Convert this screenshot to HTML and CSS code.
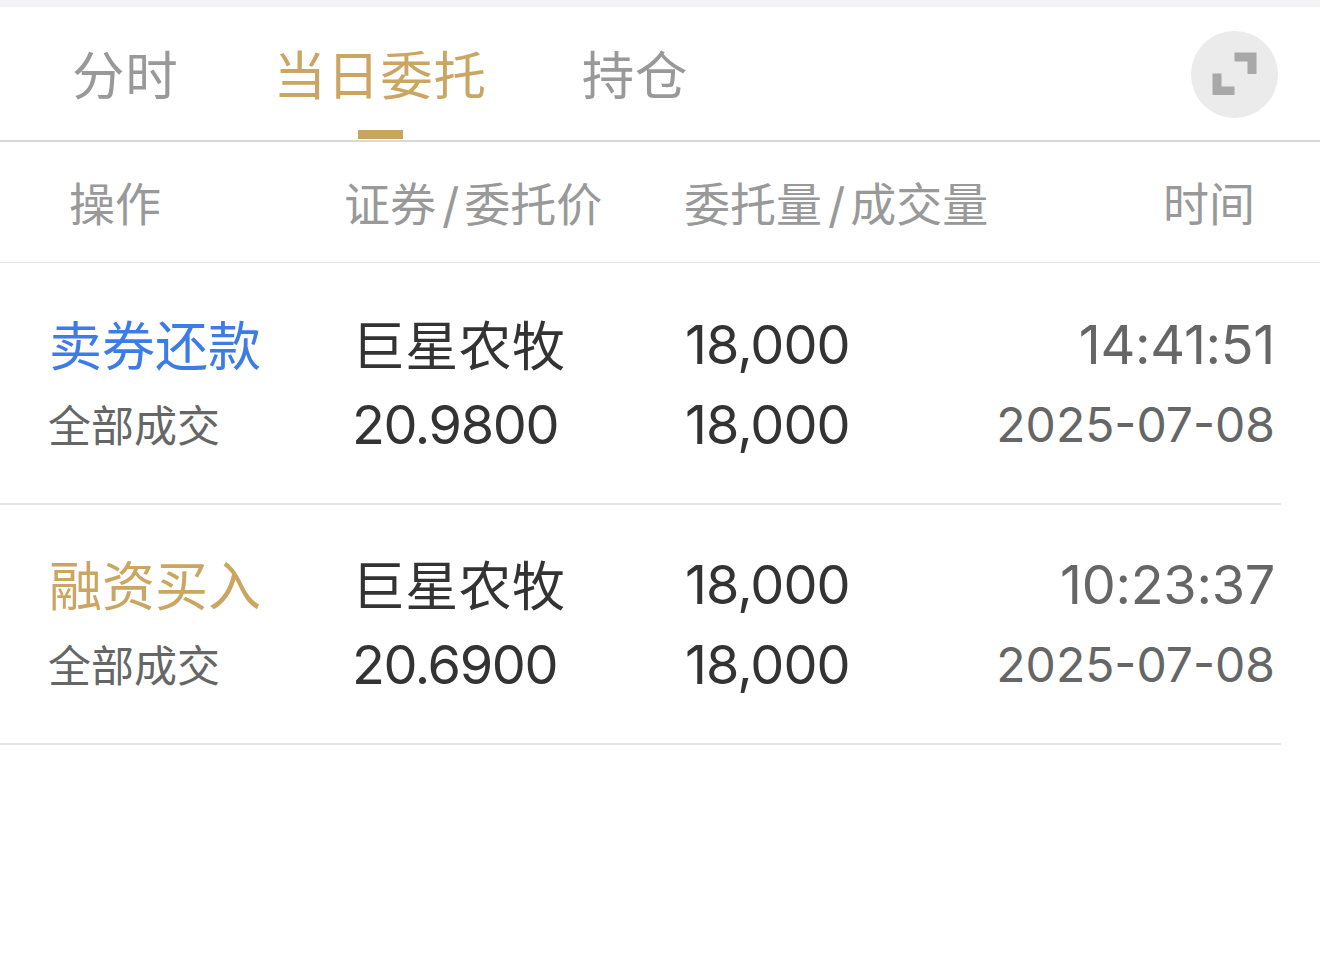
FILE: index.html
```html
<!DOCTYPE html>
<html lang="zh-CN">
<head>
    <meta charset="UTF-8">
    <meta name="viewport" content="width=device-width, initial-scale=1.0">
    <title>当日委托</title>
    <link rel="stylesheet" href="styles.css">
</head>
<body>
    <div class="top-strip"></div>
    <nav class="tabs">
        <a class="tab">分时</a>
        <a class="tab active">当日委托</a>
        <a class="tab">持仓</a>
        <button class="expand" aria-label="展开">
            <svg width="87" height="87" viewBox="0 0 87 87">
                <path d="M43.500 21.500H65.500V43H56.500V30.500H43.500Z M21.500 42.500H30.500V55.500H43.500V64H21.500Z" fill="#a8a8a8"/>
            </svg>
        </button>
    </nav>

    <div class="table-head">
        <span class="col-op">操作</span>
        <span class="col-stock">证券<i>/</i>委托价</span>
        <span class="col-amount">委托量<i>/</i>成交量</span>
        <span class="col-time">时间</span>
    </div>

    <div class="order">
        <div class="col-op">
            <p class="action sell">卖券还款</p>
            <p class="status">全部成交</p>
        </div>
        <div class="col-stock">
            <p class="name">巨星农牧</p>
            <p class="num price">20.9800</p>
        </div>
        <div class="col-amount">
            <p class="num">18,000</p>
            <p class="num">18,000</p>
        </div>
        <div class="col-time">
            <p class="time">14:41:51</p>
            <p class="date">2025-07-08</p>
        </div>
    </div>

    <div class="order">
        <div class="col-op">
            <p class="action buy">融资买入</p>
            <p class="status">全部成交</p>
        </div>
        <div class="col-stock">
            <p class="name">巨星农牧</p>
            <p class="num price">20.6900</p>
        </div>
        <div class="col-amount">
            <p class="num">18,000</p>
            <p class="num">18,000</p>
        </div>
        <div class="col-time">
            <p class="time">10:23:37</p>
            <p class="date">2025-07-08</p>
        </div>
    </div>
</body>
</html>
```

FILE: styles.css
```css
* {
    box-sizing: border-box;
}
body {
    margin: 0;
    height: 976px;
    overflow: hidden;
    background: #fff;
    color: #333;
    font-family: Inter, "Noto Sans CJK SC", sans-serif;
}
p {
    margin: 0;
    height: 80px;
    line-height: 80px;
    white-space: nowrap;
}
.top-strip {
    height: 7px;
    background: #f2f2f7;
}

/* tabs */
.tabs {
    display: flex;
    height: 135px;
    padding-left: 72px;
    padding-right: 42px;
    border-bottom: 2px solid #d9d9d9;
}
.tab {
    position: relative;
    height: 133px;
    margin-right: 95px;
    color: #999;
    font-size: 52.5px;
    letter-spacing: 0.8px;
    line-height: 139px;
    white-space: nowrap;
}
.tab.active {
    color: #cba662;
}
.tab.active::after {
    content: "";
    position: absolute;
    left: 50%;
    bottom: 1px;
    width: 45px;
    height: 9px;
    margin-left: -22px;
    background: #c9a45c;
}
.expand {
    width: 87px;
    height: 87px;
    margin: 24px 0 0 auto;
    padding: 0;
    border: 0;
    border-radius: 50%;
    background: #ebebeb;
}
.expand svg {
    display: block;
}

.table-head,
.order {
    display: grid;
    grid-template-columns: 306px 331px 299px 1fr;
    padding-left: 48px;
}
.table-head {
    height: 121px;
    border-bottom: 1px solid #e5e5e5;
    color: #999;
    font-size: 46px;
    line-height: 125px;
    white-space: nowrap;
}
.table-head i {
    padding: 0 5px 0 6px;
    font-size: 48px;
    font-style: normal;
    line-height: 1;
    vertical-align: -2px;
}
.table-head .col-op {
    padding-left: 21px;
}
.table-head .col-stock {
    margin-left: -10px;
}
.table-head .col-amount {
    margin-left: -1px;
}
.table-head .col-time {
    padding-right: 65px;
    text-align: right;
}

.order {
    width: 1281px;
    height: 240px;
    padding-top: 40px;
    border-bottom: 2px solid #e5e5e5;
}
.table-head + .order {
    height: 242px;
    padding-top: 42px;
}
.order .col-time {
    padding-right: 6px;
    text-align: right;
}
.action,
.name {
    font-size: 53px;
    line-height: 84px;
}
.action {
    padding-left: 1px;
}
.name {
    margin-left: -2px;
    letter-spacing: 0.3px;
}
.sell {
    color: #3d7be6;
}
.buy {
    color: #cba662;
}
.status {
    color: #666;
    font-size: 43px;
    line-height: 82px;
}
.num {
    font-size: 54px;
    letter-spacing: -1px;
}
.price {
    margin-left: -2px;
    letter-spacing: -1.4px;
}
.time {
    color: #666;
    font-size: 54px;
    letter-spacing: -0.3px;
}
.date {
    color: #666;
    font-size: 48px;
}
```
